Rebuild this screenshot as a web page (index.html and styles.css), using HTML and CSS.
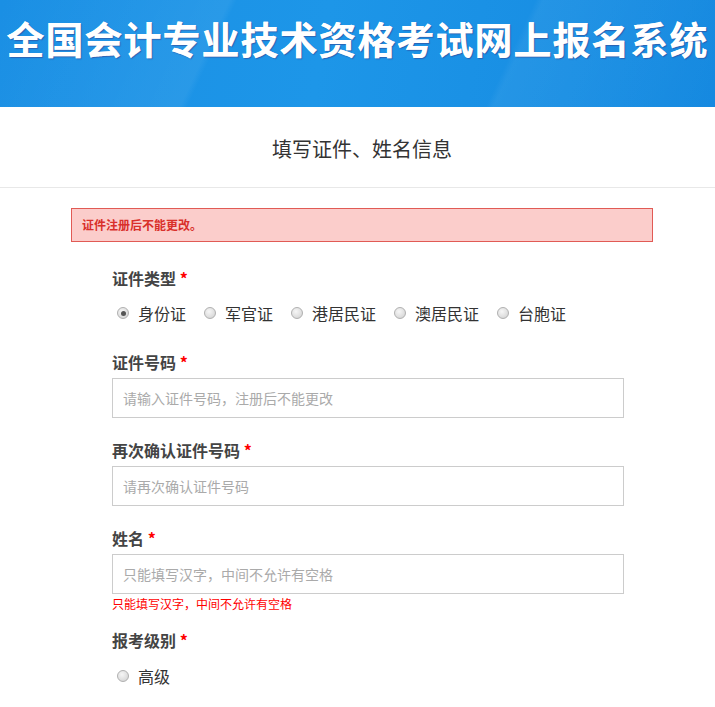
FILE: index.html
```html
<!DOCTYPE html>
<html lang="zh-CN">
<head>
<meta charset="utf-8">
<title>全国会计专业技术资格考试网上报名系统</title>
<link rel="stylesheet" href="styles.css">
</head>
<body>
<header class="banner">
  <h1 class="banner-title">全国会计专业技术资格考试网上报名系统</h1>
</header>
<div class="subhead">填写证件、姓名信息</div>
<main class="content">
  <div class="alert">证件注册后不能更改。</div>
  <form class="form">
    <div class="field field-radio">
      <div class="label">证件类型 <span class="req">*</span></div>
      <div class="radios">
        <label class="radio"><span class="dot checked"></span>身份证</label>
        <label class="radio"><span class="dot"></span>军官证</label>
        <label class="radio"><span class="dot"></span>港居民证</label>
        <label class="radio"><span class="dot"></span>澳居民证</label>
        <label class="radio"><span class="dot"></span>台胞证</label>
      </div>
    </div>
    <div class="field">
      <div class="label">证件号码 <span class="req">*</span></div>
      <input class="input" type="text" placeholder="请输入证件号码，注册后不能更改">
    </div>
    <div class="field">
      <div class="label">再次确认证件号码 <span class="req">*</span></div>
      <input class="input" type="text" placeholder="请再次确认证件号码">
    </div>
    <div class="field">
      <div class="label">姓名 <span class="req">*</span></div>
      <input class="input" type="text" placeholder="只能填写汉字，中间不允许有空格">
      <div class="hint">只能填写汉字，中间不允许有空格</div>
    </div>
    <div class="field field-tight">
      <div class="label">报考级别 <span class="req">*</span></div>
      <div class="radios">
        <label class="radio"><span class="dot"></span>高级</label>
      </div>
    </div>
  </form>
</main>
</body>
</html>
```

FILE: styles.css
```css
* { box-sizing: border-box; }
html, body { margin: 0; padding: 0; background: #fff; }
body {
  font-family: "Noto Sans CJK SC", "Liberation Sans", sans-serif;
  color: #333;
  width: 715px;
  overflow: hidden;
}
.banner {
  height: 107px;
  background:
    linear-gradient(115deg, rgba(255,255,255,0) 0%, rgba(255,255,255,0.06) 30%, rgba(255,255,255,0) 31%, rgba(255,255,255,0) 70%, rgba(255,255,255,0.05) 71%, rgba(255,255,255,0) 100%),
    linear-gradient(100deg, #1a8fe4 0%, #1d96e8 45%, #1589e0 100%);
  display: flex;
  justify-content: center;
  padding-top: 13px;
}
.banner-title {
  margin: 0;
  font-size: 38px;
  line-height: 50px;
  font-weight: 700;
  color: #fff;
  letter-spacing: 1px;
  white-space: nowrap;
  text-shadow: 1px 1px 1px rgba(60, 40, 120, 0.45), 0 0 0.5px #fff;
}
.subhead {
  height: 81px;
  border-bottom: 1px solid #e8e8e8;
  display: flex;
  align-items: center;
  justify-content: center;
  font-size: 20px;
  color: #333;
  padding-top: 2px;
  padding-left: 9px;
}
.content {
  width: 582px;
  margin: 20px 0 0 71px;
}
.alert {
  height: 34px;
  background: #fbcdcb;
  border: 1px solid #e15a55;
  color: #d9302a;
  font-size: 12px;
  font-weight: 700;
  line-height: 32px;
  padding-left: 10px;
}
.form {
  padding: 24px 29px 0 41px;
}
.field { margin-bottom: 20px; }
.field-radio { margin-bottom: 24px; }
.label {
  font-size: 16px;
  font-weight: 700;
  color: #444;
  line-height: 24px;
}
.req { color: #f00; }
.radios {
  display: flex;
  margin-top: 11px;
  gap: 18px;
  padding-left: 5px;
}
.field-radio .radios { margin-top: 11px; }
.field-radio { margin-bottom: 25px; }
.radio {
  display: flex;
  align-items: center;
  font-size: 16px;
  line-height: 24px;
  color: #333;
}
.dot {
  width: 12px;
  height: 12px;
  border-radius: 50%;
  border: 1px solid #b0b0b0;
  background: radial-gradient(circle at 40% 35%, #f6f6f6 0%, #dddddd 65%, #c9c9c9 100%);
  margin-right: 9px;
  position: relative;
}
.dot.checked::after {
  content: "";
  position: absolute;
  left: 2.5px;
  top: 2.5px;
  width: 5px;
  height: 5px;
  border-radius: 50%;
  background: #555;
}
.input {
  display: block;
  width: 512px;
  height: 40px;
  margin-top: 4px;
  border: 1px solid #ccc;
  padding: 0 10px;
  font-family: inherit;
  font-size: 14px;
  color: #333;
  outline: none;
}
.input::placeholder { color: #aaa; }
.hint {
  color: #f00;
  font-size: 12px;
  line-height: 20px;
}
.field-tight { margin-top: -6px; }
.field-tight .radios { margin-top: 12px; }
```
